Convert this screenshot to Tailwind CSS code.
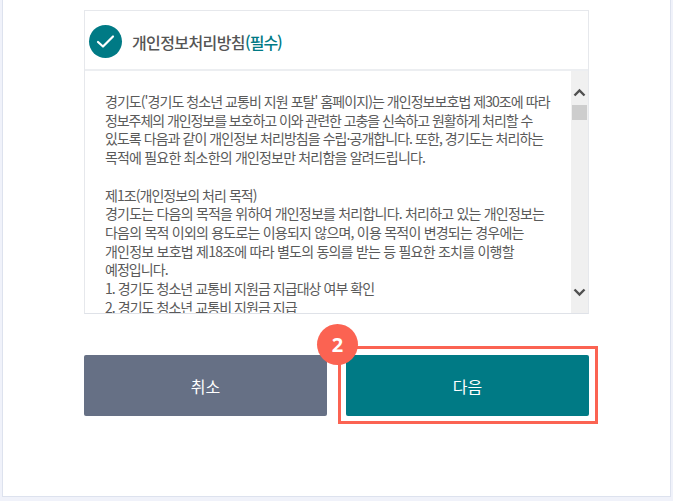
<!DOCTYPE html>
<html lang="ko">
<head>
<meta charset="UTF-8">
<title>개인정보처리방침</title>
<script src="https://cdn.jsdelivr.net/npm/@tailwindcss/browser@4"></script>
</head>
<body class="m-0 bg-[#f0f2fa] font-['Noto_Sans_CJK_KR','Noto_Sans',sans-serif]">
<div class="w-[673px] h-[501px] overflow-hidden">
  <main class="relative ml-[2px] w-[669px] h-[497px] bg-white border-x border-b border-[#dde2ee] pl-[81px] pt-[10px]">
    <!-- 약관 카드 -->
    <section class="w-[505px] h-[304px] border border-[#e6e8ec] border-b-[#dfe2e8] flex flex-col">
      <header class="h-[60px] shrink-0 flex items-center gap-[10px] pl-[4px] pt-[3px] border-b-2 border-[#eceef1]">
        <span class="w-[33px] h-[33px] rounded-full bg-[#007a85] flex items-center justify-center">
          <svg width="19" height="15" viewBox="0 0 19 15" fill="none"><path d="M2 8l5 4.500L17 2.500" stroke="#fff" stroke-width="2.200" stroke-linecap="round" stroke-linejoin="round"/></svg>
        </span>
        <h2 class="text-[16px] font-medium tracking-[-0.6px] text-[#555] leading-none">개인정보처리방침<span class="text-[#007a85] tracking-[-1px]">(필수)</span></h2>
      </header>
      <div class="flex flex-1 min-h-0">
        <div class="flex-1 overflow-hidden pl-[20px] pt-[21px] text-[14px] leading-[18.7px] tracking-[-0.95px] text-[#5a5a5a] whitespace-nowrap">
          <p>경기도('경기도 청소년 교통비 지원 포탈' 홈페이지)는 개인정보보호법 제30조에 따라</p>
          <p class="tracking-[-1.07px]">정보주체의 개인정보를 보호하고 이와 관련한 고충을 신속하고 원활하게 처리할 수</p>
          <p>있도록 다음과 같이 개인정보 처리방침을 수립·공개합니다. 또한, 경기도는 처리하는</p>
          <p class="tracking-[-0.82px]">목적에 필요한 최소한의 개인정보만 처리함을 알려드립니다.</p>
          <p class="mt-[18.7px]">제1조(개인정보의 처리 목적)</p>
          <p class="tracking-[-0.79px]">경기도는 다음의 목적을 위하여 개인정보를 처리합니다. 처리하고 있는 개인정보는</p>
          <p class="tracking-[-0.78px]">다음의 목적 이외의 용도로는 이용되지 않으며, 이용 목적이 변경되는 경우에는</p>
          <p class="tracking-[-0.77px]">개인정보 보호법 제18조에 따라 별도의 동의를 받는 등 필요한 조치를 이행할</p>
          <p>예정입니다.</p>
          <p>1. 경기도 청소년 교통비 지원금 지급대상 여부 확인</p>
          <p>2. 경기도 청소년 교통비 지원금 지급</p>
        </div>
        <!-- 스크롤바 -->
        <div class="w-[17px] shrink-0 bg-[#f0f0f0] flex flex-col items-center relative">
          <svg class="mt-[17px]" width="13" height="9" viewBox="0 0 13 9" fill="none"><path d="M1.500 7.500l5-5 5 5" stroke="#505050" stroke-width="2.400"/></svg>
          <div class="mt-[8px] w-[15px] h-[15px] bg-[#cdcdcd]"></div>
          <svg class="mt-auto mb-[16px]" width="13" height="9" viewBox="0 0 13 9" fill="none"><path d="M1.500 1.500l5 5 5-5" stroke="#505050" stroke-width="2.400"/></svg>
        </div>
      </div>
    </section>
    <!-- 버튼 -->
    <div class="mt-[41px] w-[505px] flex justify-between">
      <button class="w-[243px] h-[61px] rounded-[2px] bg-[#667085] text-white text-[16px]">취소</button>
      <button class="w-[243px] h-[61px] rounded-[2px] bg-[#007a85] text-white text-[16px]">다음</button>
    </div>
    <!-- 안내 표시 -->
    <div class="absolute left-[335px] top-[346px] w-[260px] h-[78px] border-[3px] border-[#fb6352]"></div>
    <div class="absolute left-[314px] top-[324px] w-[41px] h-[41px] rounded-full bg-[#fb6352] text-white text-[20px] font-bold flex items-center justify-center font-['Open_Sans',sans-serif]">2</div>
  </main>
</div>
</body>
</html>
